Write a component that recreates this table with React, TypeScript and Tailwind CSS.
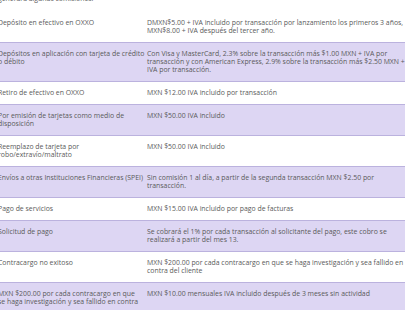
import React from 'react';

interface FeeRow {
  concept: React.ReactNode;
  cost: string;
}

const rows: FeeRow[] = [
  {
    concept: 'Depósito en efectivo en OXXO',
    cost: 'DMXN$5.00 + IVA incluido por transacción por lanzamiento los primeros 3 años, MXN$8.00 + IVA después del tercer año.',
  },
  {
    concept: 'Depósitos en aplicación con tarjeta de crédito o débito',
    cost: 'Con Visa y MasterCard, 2.3% sobre la transacción más $1.00 MXN + IVA por transacción y con American Express, 2.9% sobre la transacción más $2.50 MXN + IVA por transacción.',
  },
  { concept: 'Retiro de efectivo en OXXO', cost: 'MXN $12.00 IVA incluido por transacción' },
  { concept: 'Por emisión de tarjetas como medio de disposición', cost: 'MXN $50.00 IVA incluido' },
  { concept: 'Reemplazo de tarjeta por robo/extravío/maltrato', cost: 'MXN $50.00 IVA incluido' },
  {
    concept: 'Envíos a otras Instituciones Financieras (SPEI)',
    cost: 'Sin comisión 1 al día, a partir de la segunda transacción MXN $2.50 por transacción.',
  },
  { concept: 'Pago de servicios', cost: 'MXN $15.00 IVA incluido por pago de facturas' },
  {
    concept: 'Solicitud de pago',
    cost: 'Se cobrará el 1% por cada transacción al solicitante del pago, este cobro se realizará a partir del mes 13.',
  },
  {
    concept: 'Contracargo no exitoso',
    cost: 'MXN $200.00 por cada contracargo en que se haga investigación y sea fallido en contra del cliente',
  },
  {
    concept: (
      <>
        MXN $200.00 por cada contracargo en que
        <br />
        se haga investigación y sea fallido en contra
      </>
    ),
    cost: 'MXN $10.00 mensuales IVA incluido después de 3 meses sin actividad',
  },
];

const App: React.FC = () => {
  return (
    <div
      className="w-[405px] h-[310px] overflow-hidden bg-white text-[#5a5a5a] text-[6.9px] leading-[8px]"
      style={{ fontFamily: '"Open Sans", "Liberation Sans", sans-serif' }}
    >
      <div className="-mt-[5px] -ml-[2px] w-[414px]">
        <p className="mb-[9px]">generará algunas comisiones.</p>

        <div className="flex flex-col">
          {rows.map((row, i) => (
            <div
              key={i}
              className={`flex border-b border-[#bbb2de] ${i % 2 === 1 ? 'bg-[#ddd6f3]' : 'bg-white'}`}
            >
              <div className="w-[149px] shrink-0 py-[7px]">
                <div className="w-[152px]">{row.concept}</div>
              </div>
              <div className="w-[263px] shrink-0 py-[7px]">{row.cost}</div>
            </div>
          ))}
        </div>
      </div>
    </div>
  );
};

export default App;
